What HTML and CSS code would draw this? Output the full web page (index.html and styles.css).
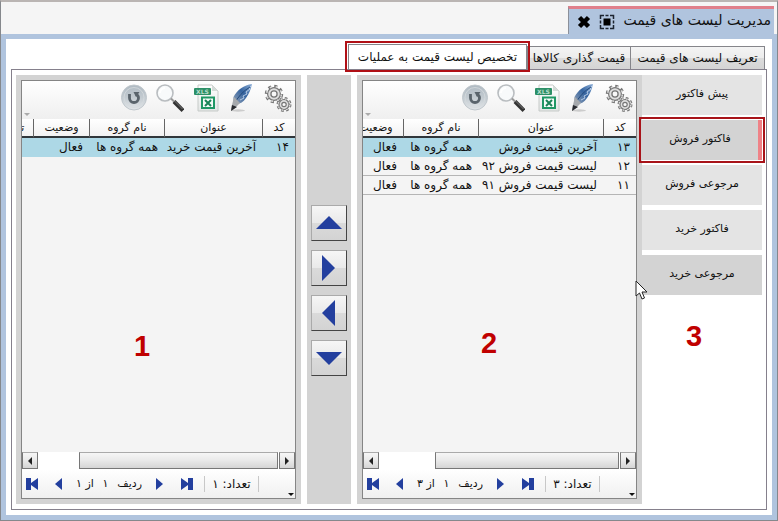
FILE: index.html
```html
<!DOCTYPE html>
<html lang="fa" dir="rtl">
<head>
<meta charset="utf-8">
<title>مدیریت لیست های قیمت</title>
<link rel="stylesheet" href="styles.css">
</head>
<body>
<svg class="defs" aria-hidden="true">
  <defs>
    <linearGradient id="disc" x1="0" y1="0" x2="0" y2="1"><stop offset="0" stop-color="#aeb9c2"/><stop offset=".5" stop-color="#c3cbd1"/><stop offset="1" stop-color="#e2e6e9"/></linearGradient>
    <linearGradient id="feather" x1="1" y1="0" x2="0" y2="1"><stop offset="0" stop-color="#8fb0d8"/><stop offset=".45" stop-color="#34639f"/><stop offset="1" stop-color="#9aa7b8"/></linearGradient>
    <linearGradient id="sheet" x1="0" y1="0" x2="0" y2="1"><stop offset="0" stop-color="#ffffff"/><stop offset="1" stop-color="#e3e6e5"/></linearGradient>
    <symbol id="gears" viewBox="0 0 28 28">
      <g fill="#dedede" stroke="#777">
        <circle cx="10" cy="10" r="7.6" fill="none" stroke-width="3.2" stroke-dasharray="3 2.97"/>
        <circle cx="10" cy="10" r="6.4" stroke-width="1.2"/>
        <circle cx="10" cy="10" r="7.4" fill="none" stroke="#d8d8d8" stroke-width="1.6" stroke-dasharray="2 3.97" stroke-dashoffset="-.5"/>
        <circle cx="10" cy="10" r="3.1" fill="#f8f8f8" stroke-width="1.3"/>
        <circle cx="20" cy="20.5" r="6" fill="none" stroke-width="3" stroke-dasharray="2.5 2.212"/>
        <circle cx="20" cy="20.5" r="5" stroke-width="1.2"/>
        <circle cx="20" cy="20.5" r="5.8" fill="none" stroke="#d8d8d8" stroke-width="1.4" stroke-dasharray="1.6 2.955" stroke-dashoffset="-.5"/>
        <circle cx="20" cy="20.5" r="2.2" fill="#f8f8f8" stroke-width="1.2"/>
      </g>
    </symbol>
    <symbol id="pen" viewBox="0 0 28 28">
      <ellipse cx="10" cy="26.5" rx="7" ry="1.2" fill="#ccc"/>
      <path d="M24 0C16 1 9 6 5.500 13L5 20c5 1 10-1 13-6 3-4 5-9 6-14z" fill="url(#feather)"/>
      <path d="M23 2l-2 2 1 1-4 3 1 2-4 2 1 2-4 2" fill="none" stroke="#b4cae6" stroke-width="1"/>
      <path d="M22 3C15 7 10 13 6 20" fill="none" stroke="#244a7c" stroke-width="1"/>
      <path d="M6 13l6 6-5 5-4 3 1-6z" fill="#a6a9ad"/>
      <path d="M4 21l5 2-6 4z" fill="#292b30"/>
    </symbol>
    <symbol id="excel" viewBox="0 0 28 28">
      <path d="M6 1h14l6 6v20H6z" fill="url(#sheet)" stroke="#c6cac8"/>
      <path d="M20 1v6h6z" fill="#d5dbd8"/>
      <rect x="2" y="4" width="17" height="7" rx="1" fill="#2c8f66"/>
      <text x="10.5" y="9.5" direction="ltr" text-anchor="middle" font-size="6" font-weight="700" fill="#b8dcca">XLS</text>
      <rect x="10" y="13.500" width="12" height="10.500" fill="#f4faf7" stroke="#1f9765" stroke-width="2"/>
      <path d="M13 16l6 6M19 16l-6 6" stroke="#198457" stroke-width="2"/>
    </symbol>
    <symbol id="search" viewBox="0 0 28 28">
      <circle cx="9" cy="9" r="8" fill="#f8fafb" stroke="#b9bdc0" stroke-width="1.6"/>
      <path d="M4 9a5 5 0 0 1 5-5" fill="none" stroke="#fff" stroke-width="2"/>
      <path d="M15 14.500l3 3" stroke="#999" stroke-width="2"/>
      <path d="M18 17.500l9 9" stroke="#333" stroke-width="4"/>
      <path d="M18.500 17l8 8" stroke="#888" stroke-width=".8"/>
    </symbol>
    <symbol id="refresh" viewBox="0 0 28 28">
      <circle cx="14" cy="13.5" r="12.5" fill="url(#disc)" stroke="#c0c7cc"/>
      <circle cx="14" cy="13.5" r="10" fill="none" stroke="#d5dadd" stroke-width=".8"/>
      <path d="M9.500 10v4a4.500 4.500 0 0 0 9 0c0-1.800-1-3-2.600-3.600" fill="none" stroke="#5a646c" stroke-width="2.8"/>
      <path d="M13.500 8h6l-3.500 5z" fill="#5a646c"/>
    </symbol>
    <symbol id="edge-l" viewBox="0 0 13 14"><path d="M0 1h5v5l7-5v12l-7-5v5H0z" fill="#233f9e"/></symbol>
    <symbol id="edge-r" viewBox="0 0 13 14"><path d="M13 1H8v5L1 1v12l7-5v5h5z" fill="#233f9e"/></symbol>
    <symbol id="step-l" viewBox="0 0 8 14"><path d="M7 1v12L0 7z" fill="#233f9e"/></symbol>
    <symbol id="step-r" viewBox="0 0 8 14"><path d="M1 1v12l7-6z" fill="#233f9e"/></symbol>
  </defs>
</svg>
<div class="window">
  <header class="titlebar">
    <div class="title-tab">
      <h1>مدیریت لیست های قیمت</h1>
      <button class="win-btn" aria-label="بزرگ نمایی"><svg width="16" height="16" viewBox="0 0 16 16"><path d="M1.500 5V1.500H5M11 1.500h3.500V5M14.500 11v3.500H11M5 14.500H1.500V11M6.500 1.500h3M6.500 14.500h3M1.500 6.500v3M14.500 6.500v3" fill="none" stroke="#1c2430" stroke-width="1.500"/><path d="M4.500 4.500h7v7h-7z" fill="#000"/></svg></button>
      <button class="win-btn" aria-label="بستن"><svg width="14" height="14" viewBox="0 0 14 14"><path d="M2.500 2.500l9 9M11.500 2.500l-9 9" stroke="#000" stroke-width="4.500"/></svg></button>
    </div>
  </header>
  <main class="frame">
    <nav class="tabs">
      <button class="tab tab-define">تعریف لیست های قیمت</button>
      <button class="tab tab-pricing">قیمت گذاری کالاها</button>
      <button class="tab tab-active">تخصیص لیست قیمت به عملیات</button>
    </nav>
    <div class="page">
      <aside class="kinds">
        <button class="kind">پیش فاکتور</button>
        <button class="kind selected">فاکتور فروش</button>
        <button class="kind">مرجوعی فروش</button>
        <button class="kind">فاکتور خرید</button>
        <button class="kind hovered">مرجوعی خرید</button>
        <span class="mark">3</span>
        <svg class="pointer" width="13" height="20" viewBox="0 0 13 20"><path d="M1 1v15l3.500-3 2.500 6 2.500-1-2.500-6h5z" fill="#fff" stroke="#222"/></svg>
      </aside>
      <section class="panel assigned">
        <div class="grid">
          <div class="toolbar">
            <button aria-label="تنظیمات"><svg><use href="#gears"/></svg></button>
            <button aria-label="ویرایش"><svg><use href="#pen"/></svg></button>
            <button aria-label="اکسل"><svg><use href="#excel"/></svg></button>
            <button aria-label="جستجو"><svg><use href="#search"/></svg></button>
            <button aria-label="بازخوانی"><svg><use href="#refresh"/></svg></button>
            <i class="more"></i>
          </div>
          <div class="rows">
            <table>
              <colgroup><col class="c-code"><col class="c-wide"><col class="c-group"><col class="c-state"></colgroup>
              <thead><tr><th>کد</th><th>عنوان</th><th>نام گروه</th><th>وضعیت</th></tr></thead>
              <tbody>
                <tr class="current"><td>۱۳</td><td>آخرین قیمت فروش</td><td>همه گروه ها</td><td>فعال</td></tr>
                <tr><td>۱۲</td><td>لیست قیمت فروش ۹۲</td><td>همه گروه ها</td><td>فعال</td></tr>
                <tr><td>۱۱</td><td>لیست قیمت فروش ۹۱</td><td>همه گروه ها</td><td>فعال</td></tr>
              </tbody>
            </table>
            <span class="mark">2</span>
          </div>
          <div class="scroll">
            <button class="arrow arrow-r" aria-label="راست"></button>
            <div class="thumb"></div>
            <button class="arrow arrow-l" aria-label="چپ"></button>
          </div>
          <div class="pager">
            <span class="count">تعداد: ۳</span>
            <button class="edge" aria-label="آخرین"><svg width="13" height="14"><use href="#edge-r"/></svg></button>
            <button class="step" aria-label="بعدی"><svg width="8" height="14"><use href="#step-r"/></svg></button>
            <span class="position"><span>ردیف</span><span>۱</span><span>از ۳</span></span>
            <button class="step" aria-label="قبلی"><svg width="8" height="14"><use href="#step-l"/></svg></button>
            <button class="edge" aria-label="اولین"><svg width="13" height="14"><use href="#edge-l"/></svg></button>
            <i class="more dark"></i>
          </div>
        </div>
      </section>
      <div class="movers">
        <button aria-label="بالا"><svg viewBox="0 0 26 26"><path d="M0 19h26L13 6z"/></svg></button>
        <button aria-label="راست"><svg viewBox="0 0 26 26"><path d="M6 0v26l13-13z"/></svg></button>
        <button aria-label="چپ"><svg viewBox="0 0 26 26"><path d="M19 0v26L6 13z"/></svg></button>
        <button aria-label="پایین"><svg viewBox="0 0 26 26"><path d="M0 7h26L13 20z"/></svg></button>
      </div>
      <section class="panel available">
        <div class="grid">
          <div class="toolbar">
            <button aria-label="تنظیمات"><svg><use href="#gears"/></svg></button>
            <button aria-label="ویرایش"><svg><use href="#pen"/></svg></button>
            <button aria-label="اکسل"><svg><use href="#excel"/></svg></button>
            <button aria-label="جستجو"><svg><use href="#search"/></svg></button>
            <button aria-label="بازخوانی"><svg><use href="#refresh"/></svg></button>
            <i class="more"></i>
          </div>
          <div class="rows">
            <table>
              <colgroup><col class="c-code"><col class="c-title"><col class="c-group"><col class="c-state"><col class="c-date"></colgroup>
              <thead><tr><th>کد</th><th>عنوان</th><th>نام گروه</th><th>وضعیت</th><th>تاریخ</th></tr></thead>
              <tbody>
                <tr class="current"><td>۱۴</td><td>آخرین قیمت خرید</td><td>همه گروه ها</td><td>فعال</td><td></td></tr>
              </tbody>
            </table>
            <span class="mark">1</span>
          </div>
          <div class="scroll">
            <button class="arrow arrow-r" aria-label="راست"></button>
            <div class="thumb"></div>
            <button class="arrow arrow-l" aria-label="چپ"></button>
          </div>
          <div class="pager">
            <span class="count">تعداد: ۱</span>
            <button class="edge" aria-label="آخرین"><svg width="13" height="14"><use href="#edge-r"/></svg></button>
            <button class="step" aria-label="بعدی"><svg width="8" height="14"><use href="#step-r"/></svg></button>
            <span class="position"><span>ردیف</span><span>۱</span><span>از ۱</span></span>
            <button class="step" aria-label="قبلی"><svg width="8" height="14"><use href="#step-l"/></svg></button>
            <button class="edge" aria-label="اولین"><svg width="13" height="14"><use href="#edge-l"/></svg></button>
            <i class="more dark"></i>
          </div>
        </div>
      </section>
    </div>
  </main>
</div>
</body>
</html>
```

FILE: styles.css
```css
* { box-sizing: border-box; }
body { margin: 0; font-family: "DejaVu Sans", sans-serif; font-size: 11px; color: #111; }
button { font: inherit; color: inherit; margin: 0; padding: 0; border: 0; background: none; }
svg { display: block; }
.defs { position: absolute; width: 0; height: 0; }

.window { display: flex; flex-direction: column; height: 100vh; border: 1px solid #85888c; border-top: 2px solid #bab5b3; background: #f5f5f5; }
.titlebar { display: flex; height: 32px; padding: 4px 3px 0; }
.title-tab { display: flex; align-items: center; gap: 8px; padding: 0 3px 0 8px; border-top: 3px solid #e07f8a; border-left: 1px solid #8b909a; background: #b0c4de; }
.title-tab h1 { margin: 0; font-size: 14px; line-height: 20px; padding-bottom: 4px; font-weight: 400; white-space: nowrap; }

.frame { flex: 1; display: flex; flex-direction: column; min-height: 0; padding: 5px; border: 5px solid #b0c4de; background: #fff; }
.tabs { display: flex; align-items: flex-end; height: 25px; padding-right: 2px; font-size: 12px; }
.tab { height: 23px; border: 1px solid #85858a; border-bottom: 0; background: linear-gradient(#f4f4f4, #ececec 50%, #dcdcdc 51%, #d4d4d4); white-space: nowrap; }
.tab-define { width: 135px; }
.tab-pricing { width: 103px; border-right: 0; }
.tab-active { width: 179px; height: 25px; background: #fff; outline: 2px solid #b01016; outline-offset: 1px; position: relative; }

.page { flex: 1; display: flex; min-height: 0; padding: 5px 4px; border: 1px solid #85808c; background: #fff; }
.kinds { position: relative; flex: 0 0 120px; display: flex; flex-direction: column; gap: 5px; }
.kind { height: 40px; padding-bottom: 4px; background: #e4e4e4; }
.kind.hovered { background: #d3d3d3; }
.kind.selected { position: relative; z-index: 1; border-right: 4px solid #ef8287; background: #d3d3d3; outline: 2px solid #a81319; outline-offset: 1px; }

.panel { flex: 1; min-width: 0; display: flex; padding: 5px; background: #d3d3d3; }
.grid { flex: 1; min-width: 0; display: flex; flex-direction: column; border: 1px solid #858585; background: #f4f4f4; }
.toolbar { position: relative; display: flex; align-items: center; gap: 8px; height: 38px; padding: 0 3px 4px; background: linear-gradient(#fff, #efefef); }
.toolbar svg { width: 28px; height: 28px; }
.more { position: absolute; left: 2px; bottom: 3px; border: 3px solid transparent; border-top-color: #aaa; border-bottom: 0; }
.more.dark { left: auto; right: 1px; bottom: 2px; border-top-color: #111; }

.rows { position: relative; flex: 1; overflow: hidden; }
table { table-layout: fixed; width: 0; border-collapse: separate; border-spacing: 0; }
.c-code { width: 33px; }
.c-title { width: 98px; }
.c-wide { width: 125px; }
.c-group { width: 75px; }
.c-state { width: 56px; }
.c-date { width: 40px; }
th, td { height: 19px; padding: 0 6px; line-height: 17px; font-weight: 400; white-space: nowrap; text-align: right; overflow: hidden; }
th { text-align: center; border-left: 1px solid #666; border-bottom: 2px solid #30363a; background: linear-gradient(#fff, #f2f2f2); }
td { font-size: 12px; border-bottom: 1px solid #b5b5b5; }
.current td { background: #add8e6; border-color: #add8e6; }

.scroll { display: flex; height: 17px; background: #fff; }
.arrow { display: flex; align-items: center; justify-content: center; width: 16px; }
.arrow, .thumb { border: 1px solid #777; border-top-color: #aaa; background: linear-gradient(#f6f6f6, #e9e9e9 50%, #d5d5d5); }
.arrow::before { content: ""; border: 4px solid transparent; }
.arrow-l::before { border-right-color: #222; border-left: 0; }
.arrow-r::before { border-left-color: #222; border-right: 0; }
.thumb { flex: 1; margin: 0 1px 0 41px; }
.assigned .thumb { margin-left: 56px; }

.pager { position: relative; display: flex; align-items: center; gap: 8px; height: 29px; padding-right: 36px; background: linear-gradient(#fff, #f0f0f0); }
.pager button { display: flex; justify-content: center; flex: none; }
.count { width: 55px; font-size: 12px; line-height: 16px; text-align: center; border: 1px solid #c8c8c8; border-width: 0 1px; white-space: nowrap; }
.edge { width: 20px; }
.step { width: 18px; }
.position { display: flex; justify-content: space-between; width: 66px; white-space: nowrap; }

.movers { flex: 0 0 44px; display: flex; flex-direction: column; align-items: center; gap: 9px; margin: 0 6px; padding-top: 130px; background: #d3d3d3; }
.movers button { display: flex; align-items: center; justify-content: center; width: 36px; height: 36px; border: 1px solid #aaa; border-color: #aaa #444 #444 #aaa; background: linear-gradient(#f6f6f6, #e9e9e9 50%, #dadada 51%, #d3d3d3); }
.movers svg { width: 26px; height: 26px; fill: #233f9e; }

.mark { position: absolute; font: bold 29px/32px "Liberation Sans", sans-serif; color: #c00000; }
.available .mark { left: 112px; top: 211px; }
.assigned .mark { left: 118px; top: 208px; }
.kinds .mark { left: 44px; top: 245px; }
.pointer { position: absolute; left: -7px; top: 205px; }
```
